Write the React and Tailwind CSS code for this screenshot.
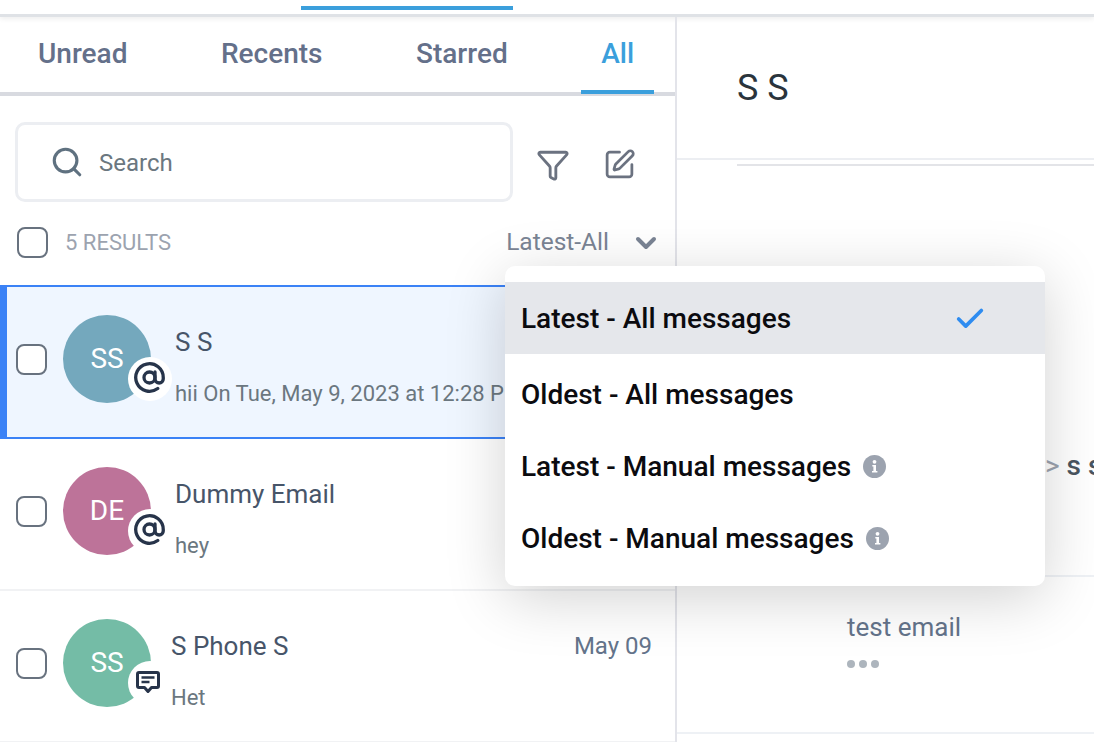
import React from "react";
import { AtSign, Check, ChevronDown, Filter, Search, SquarePen } from "lucide-react";

const tabs = ["Unread", "Recents", "Starred", "All"];

const rows = [
  { name: "S S", preview: "hii On Tue, May 9, 2023 at 12:28 PM", initials: "SS", color: "bg-[#74a8bd]", badge: "mail", selected: true },
  { name: "Dummy Email", preview: "hey", initials: "DE", color: "bg-[#bd7399]", badge: "mail" },
  { name: "S Phone S", preview: "Het", initials: "SS", color: "bg-[#74bca6]", badge: "sms", date: "May 09", shift: true },
];

const sortOptions = [
  { label: "Latest - All messages", active: true },
  { label: "Oldest - All messages", gap: true },
  { label: "Latest - Manual messages", info: true },
  { label: "Oldest - Manual messages", info: true },
];

const SmsIcon = () => (
  <svg width="26" height="24" viewBox="0 0 26 24" fill="none">
    <path
      d="M4 2.5h18a1.5 1.5 0 0 1 1.5 1.5v12a1.5 1.5 0 0 1-1.5 1.5h-5.5L13 21.5 9.500 17.500H4A1.500 1.500 0 0 1 2.500 16V4A1.500 1.500 0 0 1 4 2.500z"
      stroke="#27344a"
      strokeWidth="3"
      strokeLinejoin="round"
    />
    <path d="M6.500 7.500h13M6.500 12h8" stroke="#27344a" strokeWidth="2.400" />
  </svg>
);

const InfoIcon = () => (
  <svg width="23" height="23" viewBox="0 0 23 23" className="ml-3">
    <circle cx="11.500" cy="11.500" r="11.500" fill="#9ca3af" />
    <circle cx="11.500" cy="6.800" r="1.900" fill="#fff" />
    <path d="M9.300 10h3.700v6h1.400v1.600H9v-1.600h1.400v-4.400H9.300z" fill="#fff" />
  </svg>
);

const CheckBox = ({ className = "" }) => (
  <div className={`w-[31px] h-[31px] shrink-0 rounded-lg border-2 border-[#68727f] bg-white ${className}`} />
);

const ConversationRow = ({ row }) => (
  <div
    className={`flex items-start ${
      row.selected
        ? "h-[154px] bg-[#eff6ff] border-y-2 border-l-[7px] border-[#3b82f6] pl-[9px] pt-[28px]"
        : "h-[152px] border-b-2 border-[#f1f2f4] pl-[16px] pt-[28px]"
    }`}
  >
    <CheckBox className="mt-[29px]" />
    <div className="relative ml-[16px] w-[88px] h-[88px] shrink-0">
      <div className={`w-full h-full rounded-full ${row.color} flex items-center justify-center text-white text-[28px]`}>
        {row.initials}
      </div>
      <div className="absolute left-[65px] top-[42px] w-[44px] h-[44px] rounded-full bg-white flex items-center justify-center">
        {row.badge === "mail" ? (
          <AtSign size={33} strokeWidth={2.400} color="#27344a" className="-mt-[3px] -ml-[1px]" />
        ) : (
          <div className="-mt-[2px] -ml-[5px] flex">
            <SmsIcon />
          </div>
        )}
      </div>
    </div>
    <div className={`flex-1 min-w-0 ${row.shift ? "ml-[20px]" : "ml-[24px]"} pr-[23px]`}>
      <div className="flex justify-between items-center h-[28px] mt-[13px]">
        <span className="text-[26px] leading-[28px] text-[#475569]">{row.name}</span>
        {row.date && <span className="text-[24px] text-[#64748b]">{row.date}</span>}
      </div>
      <div className="mt-[24px] text-[22px] leading-[28px] text-[#6b7780] whitespace-nowrap">{row.preview}</div>
    </div>
  </div>
);

export default function App() {
  return (
    <div className="relative w-[1094px] h-[742px] overflow-hidden bg-white font-['Roboto',sans-serif]">
      <div className="h-[17px] border-b-[3px] border-[#dfe2e6] shadow-[0_2px_5px_rgba(0,0,0,0.07)] pt-[6px] pl-[301px]">
        <div className="w-[212px] h-[4px] bg-[#3b9fdc]" />
      </div>

      <div className="flex h-[725px]">
        <div className="w-[677px] shrink-0 border-r-2 border-[#e3e4ea]">
          <div className="h-[79px] border-b-4 border-[#d8dae0] flex items-start pl-[18px] gap-[53.500px]">
            {tabs.map((tab) => (
              <div
                key={tab}
                className={`h-[77px] px-5 pt-[18px] text-[28px] leading-[38px] font-medium ${
                  tab === "All" ? "text-[#3b9fdc] border-b-4 border-[#3b9fdc]" : "text-[#64708a]"
                }`}
              >
                {tab}
              </div>
            ))}
          </div>

          <div className="flex items-center pl-[15px] pt-[26px]">
            <div className="w-[498px] h-[80px] rounded-[10px] border-[3px] border-[#eceef2] flex items-center pl-[32px]">
              <Search size={34} strokeWidth={2.200} color="#5f7180" />
              <span className="ml-[15px] mt-[2px] text-[24px] text-[#6b7780]">Search</span>
            </div>
            <Filter size={34} strokeWidth={2} color="#6b7280" className="ml-[23px] mt-[5px]" />
            <SquarePen size={33} strokeWidth={2} color="#6b7280" className="ml-[33px] mt-[5px]" />
          </div>

          <div className="h-[83px] flex items-center pl-[17px] pr-[13px] pb-[2px]">
            <CheckBox />
            <span className="ml-[17px] text-[22px] text-[#9ca3af]">5 RESULTS</span>
            <span className="ml-auto text-[24.500px] text-[#7a8494]">Latest-All</span>
            <ChevronDown size={32} strokeWidth={3} color="#7a8494" className="ml-[21px]" />
          </div>

          {rows.map((row) => (
            <ConversationRow key={row.name} row={row} />
          ))}
        </div>

        <div className="flex-1 min-w-0">
          <div className="h-[143px] border-b-2 border-[#eceef2] pl-[60px] pt-[48px] text-[36px] leading-[46px] text-[#2a343c]">
            S S
          </div>
          <div className="ml-[60px] mt-[4px] h-[2px] bg-[#e3e4e8]" />
          <div className="h-[411px] border-b-2 border-[#eef1f5] flex items-end pl-[368px] pb-[88px]">
            <span className="text-[28px] font-medium text-[#4a5560] whitespace-nowrap">
              <span className="text-[#9ca3af] font-normal">&gt;</span> s s
            </span>
          </div>
          <div className="h-[157px] border-b-2 border-[#eef1f5] pl-[170px] pt-[33px]">
            <div className="text-[26px] leading-[34px] text-[#64748b]">test email</div>
            <div className="flex gap-[4px] mt-[16px]">
              <span className="w-[8px] h-[8px] rounded-full bg-[#adb5bd]" />
              <span className="w-[8px] h-[8px] rounded-full bg-[#adb5bd]" />
              <span className="w-[8px] h-[8px] rounded-full bg-[#adb5bd]" />
            </div>
          </div>
        </div>
      </div>

      <div className="absolute left-[505px] top-[266px] w-[540px] h-[320px] bg-white rounded-[10px] pt-[16px] shadow-[0_12px_60px_rgba(0,0,0,0.18)]">
        {sortOptions.map((option) => (
          <div
            key={option.label}
            className={`h-[72px] flex items-center pl-[16px] pt-[1px] text-[28px] font-medium text-[#0b0b0f] ${
              option.active ? "bg-[#e5e7eb]" : ""
            } ${option.gap ? "mt-[4px]" : ""}`}
          >
            {option.label}
            {option.info && <InfoIcon />}
            {option.active && <Check size={34} strokeWidth={2.600} color="#2e8cf0" className="ml-auto mr-[58px]" />}
          </div>
        ))}
      </div>
    </div>
  );
}
